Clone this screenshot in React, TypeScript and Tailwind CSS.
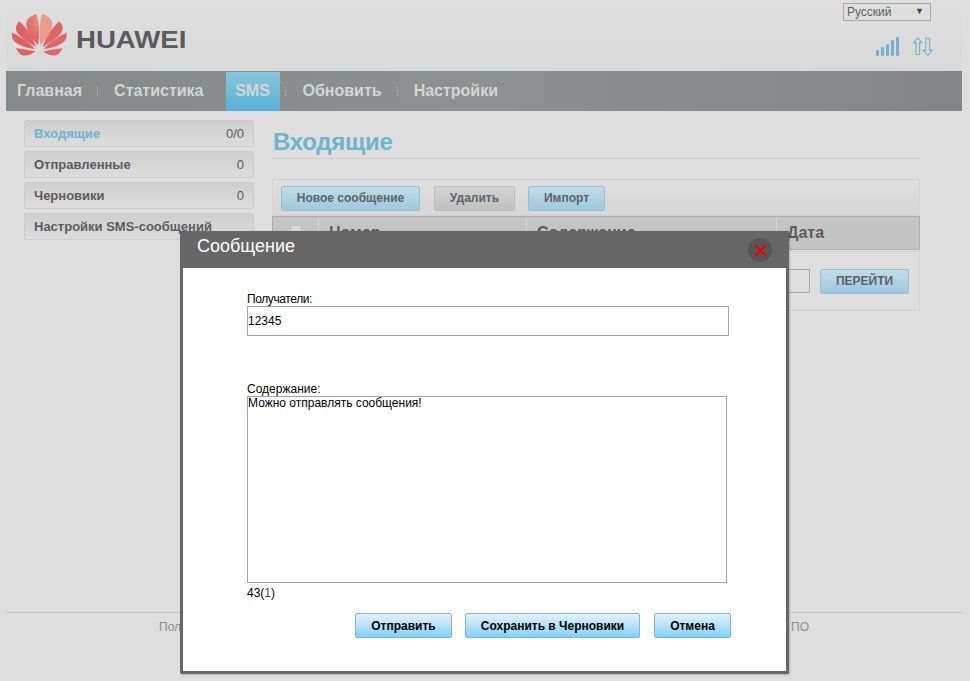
const fonts = "font-['Liberation_Sans',Arial,sans-serif]";

const leftPetals = [
  "M33 37 C25 29 20 20 21.5 14 C22.5 10 27 7.5 31.5 6 C34 14 35 27 33 37 Z",
  "M31 39 C22 34 12.5 28 11 21.5 C10.5 18 12 15.5 14.5 13.5 C22 20 28 30 31 39 Z",
  "M30 41 C20 40 10 36 7.5 31 C7 29 7 27 7 24.5 C14 28 24 34 30 41 Z",
  "M11 40 C16 41 25 42 30.5 43.5 C27 46 22 48 18.5 47.5 C15 47 13 44 11 40 Z",
];

function Logo() {
  return (
    <svg width="70" height="55" viewBox="0 0 70 55" className="shrink-0">
      <defs>
        <radialGradient id="petalGlow" gradientUnits="userSpaceOnUse" cx="41" cy="10" r="26">
          <stop offset="0" stopColor="#eeae9c" />
          <stop offset="0.55" stopColor="#e27a72" />
          <stop offset="1" stopColor="#de6263" />
        </radialGradient>
      </defs>
      {leftPetals.map((d, i) => (
        <g key={i}>
          <path d={d} fill="url(#petalGlow)" />
          <path d={d} fill="#df6667" transform="matrix(-1 0 0 1 68.6 0)" opacity={i === 0 ? 0 : 1} />
        </g>
      ))}
      <path d={leftPetals[0]} fill="#eb9d8d" transform="matrix(-1 0 0 1 68.6 0)" />
    </svg>
  );
}

function Signal() {
  return (
    <svg width="25" height="19" viewBox="0 0 25 19">
      {[
        [0, 13],
        [5, 10],
        [10, 7],
        [15, 3],
        [20, 0],
      ].map(([x, y]) => (
        <rect key={x} x={x} y={y} width="3" height={19 - y} rx="1.2" fill="#74b0cf" />
      ))}
    </svg>
  );
}

function Arrows() {
  return (
    <svg width="20" height="19" viewBox="0 0 20 19" fill="none" stroke="#76b2d2" strokeWidth="1.1">
      <path d="M4.8 .8 L9 5.6 H6.6 V17.5 H3 V5.6 H.6 Z" />
      <path d="M14.7 18.3 L19.2 13.4 H16.6 V1.2 H12.8 V13.4 H10.2 Z" />
    </svg>
  );
}

function Sep() {
  return <div className="w-0 h-[9px] border-l border-dotted border-[#b4b6b6] ml-[15px] mr-[16px]" />;
}

function NavText({ children }: { children: string }) {
  return <span className="font-bold text-[16px] text-[#d5d5d5]">{children}</span>;
}

function SideItem({ label, count, active }: { label: string; count?: string; active?: boolean }) {
  return (
    <div className="h-[27px] flex items-center justify-between pl-[9px] pr-[9px] border border-[#cbcbcb] rounded-[2px] bg-gradient-to-b from-[#cfcfcf] to-[#dcdcdc] text-[13px] font-bold">
      <span className={active ? "text-[#6fb4cf]" : "text-[#5c5c5c]"}>{label}</span>
      {count && <span className="text-[#5c5c5c] font-normal">{count}</span>}
    </div>
  );
}

function TopButton({ label, blue, className }: { label: string; blue?: boolean; className: string }) {
  return (
    <div
      className={`h-[25px] flex items-center justify-center rounded-[2px] border text-[12px] font-bold text-[#5c6468] ${
        blue
          ? "border-[#9cbdd2] bg-gradient-to-b from-[#c3dbe6] to-[#9dc9df]"
          : "border-[#bcbcbc] bg-gradient-to-b from-[#d4d4d4] to-[#c0c0c0]"
      } ${className}`}
    >
      {label}
    </div>
  );
}

function ModalButton({ label, className }: { label: string; className: string }) {
  return (
    <div
      className={`h-[25px] flex items-center justify-center rounded-[2px] border border-[#7fb4d6] bg-gradient-to-b from-[#e3f1fa] to-[#7fd2fb] text-[12px] font-bold text-black ${className}`}
    >
      {label}
    </div>
  );
}

export default function App() {
  return (
    <div className={`relative w-[970px] h-[681px] overflow-hidden bg-[#dedede] ${fonts}`}>
      <div className="mx-[6px] w-[956px]">
        {/* header */}
        <div className="h-[71px] flex justify-between bg-gradient-to-b from-[#dedede] to-[#d9d9d9]">
          <div className="flex items-start pt-[8px] -ml-px">
            <Logo />
            <span className="ml-[1px] mt-[20px] text-[24px] leading-[24px] font-bold text-[#5b5b5b] origin-left scale-x-[1.15]">
              HUAWEI
            </span>
          </div>
          <div className="flex flex-col items-end pr-[29px] pt-[3px]">
            <div className="mr-[2px] w-[88px] h-[18px] flex items-center justify-between border border-[#a8a8a8] pl-[3px] pr-[6px] text-[12px] text-[#626262]">
              <span>Русский</span>
              <span className="text-[9px] text-[#444]">▼</span>
            </div>
            <div className="mt-[16px] flex items-center gap-[12px]">
              <Signal />
              <Arrows />
            </div>
          </div>
        </div>
        {/* nav */}
        <div className="h-[40px] flex items-center pl-[11px] bg-gradient-to-r from-[#858989] via-[#8d9191] to-[#838686]">
          <NavText>Главная</NavText>
          <Sep />
          <NavText>Статистика</NavText>
          <div className="ml-[22px] w-[54px] h-[39px] pb-px self-end flex items-center justify-center bg-gradient-to-b from-[#88c6dd] to-[#57b0d6]">
            <NavText>SMS</NavText>
          </div>
          <div className="w-0 h-[9px] border-l border-dotted border-[#b4b6b6] ml-[5px] mr-[17px]" />
          <NavText>Обновить</NavText>
          <Sep />
          <NavText>Настройки</NavText>
        </div>
        {/* body */}
        <div className="flex pt-[9px] pl-[18px]">
          <div className="w-[230px] flex flex-col gap-[4px]">
            <SideItem label="Входящие" count="0/0" active />
            <SideItem label="Отправленные" count="0" />
            <SideItem label="Черновики" count="0" />
            <SideItem label="Настройки SMS-сообщений" />
          </div>
          <div className="ml-[18px] w-[648px]">
            <div className="h-[39px] border-b border-[#cfcfcf] pl-px pt-[8px] text-[24px] leading-[28px] font-bold tracking-[-0.25px] text-[#6fb4cf]">
              Входящие
            </div>
            <div className="mt-[20px] h-[37px] border border-[#d2d2d2] bg-gradient-to-b from-[#dedede] to-[#d6d6d6] flex items-center pl-[8px] pt-px">
              <TopButton label="Новое сообщение" blue className="w-[139px]" />
              <TopButton label="Удалить" className="ml-[14px] w-[81px]" />
              <TopButton label="Импорт" blue className="ml-[13px] w-[77px]" />
            </div>
            <div className="h-[34px] border border-[#aeaeae] bg-[#c4c4c4] flex items-center text-[16px] font-bold text-[#5c5c5c]">
              <div className="w-[46px] h-full flex items-center justify-center border-r border-[#d5d5d5]">
                <div className="w-[12px] h-[12px] mb-[4px] rounded-[2px] border border-[#bdbdbd] bg-[#d8d8d8]" />
              </div>
              <div className="w-[208px] h-full flex items-center pl-[10px] border-r border-[#d5d5d5]">Номер</div>
              <div className="w-[250px] h-full flex items-center pl-[10px] border-r border-[#d5d5d5]">Содержание</div>
              <div className="flex-1 h-full flex items-center pl-[10px]">Дата</div>
            </div>
            <div className="mt-px h-[60px] border border-[#d2d2d2] flex items-center justify-end pr-[10px]">
              <div className="w-[40px] h-[24px] border border-[#a8a8a8]" />
              <div className="ml-[10px] w-[89px] h-[25px] flex items-center justify-center rounded-[2px] border border-[#9cbdd2] bg-gradient-to-b from-[#c3dbe6] to-[#9dc9df] text-[12px] font-bold text-[#5c6468]">
                ПЕРЕЙТИ
              </div>
            </div>
          </div>
        </div>
        {/* footer */}
        <div className="mt-[301px] h-[28px] border-t border-[#c4c4c4] flex justify-between items-center pl-[153px] pr-[153px] text-[12px] text-[#8e8e8e]">
          <span>Политика конфиденциальности</span>
          <span>Лицензия на ПО</span>
        </div>
      </div>

      {/* modal */}
      <div className="absolute left-[180px] top-[231px] w-[609px] h-[443px] flex flex-col border-x-[3px] border-b-[3px] border-[#666666] rounded-b-[2px] shadow-[1px_1px_2px_rgba(0,0,0,0.2)]">
        <div className="-mx-[3px] h-[37px] shrink-0 bg-[#666666] flex items-start justify-between pl-[17px] pr-[17px] text-[18px] text-white">
          <span className="mt-[4px] leading-[22px]">Сообщение</span>
          <div className="mt-[7px] w-[24px] h-[24px] rounded-full bg-[#565656] flex items-center justify-center">
            <svg width="13" height="13" viewBox="0 0 13 13" stroke="#f00000" strokeWidth="2" fill="none">
              <path d="M1 1 L12 12 M12 1 L1 12" />
            </svg>
          </div>
        </div>
        <div className="flex-1 bg-white pl-[64px] pt-[23px] text-[12px] text-black">
          <div className="h-[14px] leading-[16px] tracking-[-0.4px]">Получатели:</div>
          <div className="mt-[1px] w-[482px] h-[30px] border border-[#a3a3a3] flex items-center">12345</div>
          <div className="mt-[45px] h-[14px] leading-[16px]">Содержание:</div>
          <div className="mt-[1px] w-[480px] h-[187px] border border-[#a3a3a3] leading-[13px]">
            Можно отправлять сообщения!
          </div>
          <div className="mt-[3px] h-[14px] leading-[14px]">
            43(<span className="text-[#1a4f7a]">1</span>)
          </div>
          <div className="mt-[13px] ml-[108px] flex">
            <ModalButton label="Отправить" className="w-[97px]" />
            <ModalButton label="Сохранить в Черновики" className="ml-[13px] w-[175px]" />
            <ModalButton label="Отмена" className="ml-[14px] w-[77px]" />
          </div>
        </div>
      </div>
    </div>
  );
}
